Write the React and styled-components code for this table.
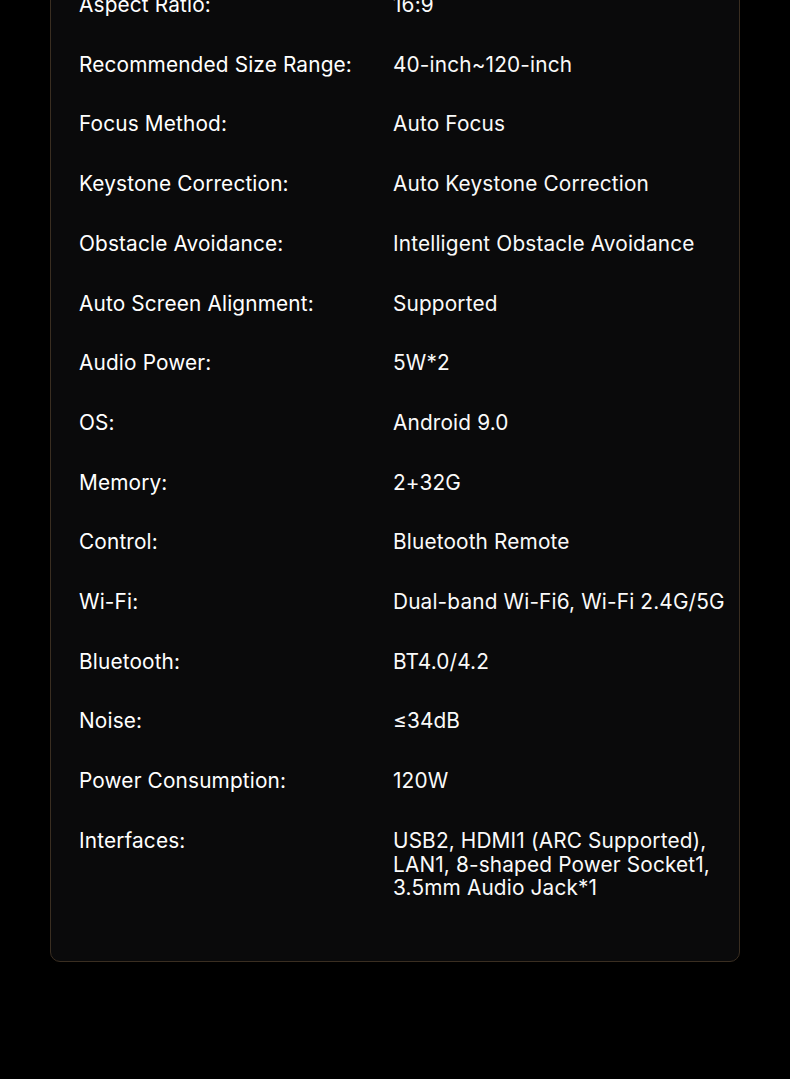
import React from "react";
import styled, { createGlobalStyle } from "styled-components";

const Global = createGlobalStyle`
  html, body { margin: 0; background: #000; }
  body { font-family: Inter, "Open Sans", sans-serif; }
`;

const Page = styled.div`
  padding: 0 50px 118px;
  overflow: hidden;
`;

const Card = styled.section`
  margin-top: -48px;
  background: #0a0a0b;
  border: 1px solid #3a2e21;
  border-radius: 10px;
  padding: 40px 8px 61px 28px;
  display: flex;
  flex-direction: column;
  gap: 36px;
`;

const Row = styled.div`
  display: grid;
  grid-template-columns: 314px 1fr;
  align-items: start;
`;

const Label = styled.div`
  font-size: 20.8px;
  line-height: 23.7px;
  color: #fff;
  letter-spacing: 0.15px;
`;

const Value = styled(Label)`
  color: #fafafa;
`;

const specs = [
  ["Aspect Ratio:", "16:9"],
  ["Recommended Size Range:", "40-inch~120-inch"],
  ["Focus Method:", "Auto Focus"],
  ["Keystone Correction:", "Auto Keystone Correction"],
  ["Obstacle Avoidance:", "Intelligent Obstacle Avoidance"],
  ["Auto Screen Alignment:", "Supported"],
  ["Audio Power:", "5W*2"],
  ["OS:", "Android 9.0"],
  ["Memory:", "2+32G"],
  ["Control:", "Bluetooth Remote"],
  ["Wi-Fi:", "Dual-band Wi-Fi6, Wi-Fi 2.4G/5G"],
  ["Bluetooth:", "BT4.0/4.2"],
  ["Noise:", "≤34dB"],
  ["Power Consumption:", "120W"],
  [
    "Interfaces:",
    ["USB2, HDMI1 (ARC Supported),", "LAN1, 8-shaped Power Socket1,", "3.5mm Audio Jack*1"],
  ],
];

export default function App() {
  return (
    <Page>
      <Global />
      <Card>
        {specs.map(([label, value]) => (
          <Row key={label}>
            <Label>{label}</Label>
            <Value>
              {Array.isArray(value)
                ? value.map((line) => <div key={line}>{line}</div>)
                : value}
            </Value>
          </Row>
        ))}
      </Card>
    </Page>
  );
}
